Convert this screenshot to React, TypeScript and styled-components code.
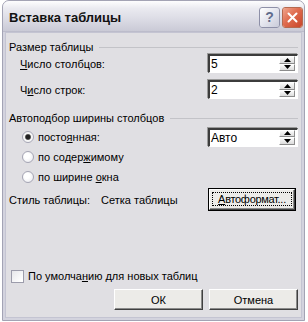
import React from "react";
import styled, { createGlobalStyle } from "styled-components";

const GlobalStyle = createGlobalStyle`
  html, body {
    margin: 0;
    padding: 0;
    background: #ffffff;
  }
  body {
    font-family: "Liberation Sans", Arial, sans-serif;
    font-size: 11px;
    color: #000;
  }
`;

const Window = styled.div`
  margin-left: 2px;
  width: 303px;
  height: 321px;
  display: flex;
  flex-direction: column;
  box-sizing: border-box;
  border: 1px solid #a3a3b4;
  border-radius: 7px 7px 0 0;
  background: #d7d7e2;
  overflow: hidden;
`;

const TitleBar = styled.div`
  height: 30px;
  flex: none;
  display: flex;
  align-items: center;
  padding: 0 1px 0 6px;
  background: linear-gradient(
    #fdfdfe 0%,
    #eaeaf0 25%,
    #dcdce5 60%,
    #cacad6 100%
  );
  box-sizing: border-box;
`;

const Title = styled.span`
  flex: 1;
  font-family: "Liberation Sans", Arial, sans-serif;
  font-weight: bold;
  font-size: 13px;
  color: #111;
  padding-top: 2px;
`;

const CaptionButton = styled.div<{ $red?: boolean }>`
  width: 21px;
  height: 21px;
  margin-left: 2px;
  margin-top: 2px;
  box-sizing: border-box;
  border: 1px solid #ffffff;
  border-radius: 3px;
  outline: 1px solid ${(p) => (p.$red ? "#b5694f" : "#8e90a8")};
  outline-offset: -1px;
  display: flex;
  align-items: center;
  justify-content: center;
  background: ${(p) =>
    p.$red
      ? "linear-gradient(135deg, #f0a58d 0%, #df6c4f 45%, #c9452a 100%)"
      : "linear-gradient(135deg, #ffffff 0%, #e4e5ee 50%, #c9cbd9 100%)"};
  color: #5f6c8c;
  font-weight: bold;
  font-size: 14px;
`;

const Frame = styled.div`
  flex: 1;
  display: flex;
  padding: 0 2px 2px 2px;
  background: #d3d3de;
  border-top: 1px solid #bcbccb;
`;

const Client = styled.div`
  flex: 1;
  display: flex;
  flex-direction: column;
  background: #e0dfe3;
  border: 1px solid #c4c4d2;
  padding: 7px 3px 7px 2px;
`;

const GroupHeader = styled.div<{ $top?: number }>`
  display: flex;
  align-items: center;
  height: 14px;
  margin-top: ${(p) => p.$top ?? 0}px;
  padding-left: 1px;
  gap: 6px;
`;

const GroupLine = styled.div`
  flex: 1;
  height: 0;
  border-top: 1px solid #c3c3c8;
  margin-top: 1px;
`;

const FieldRow = styled.div<{ $top?: number }>`
  display: flex;
  align-items: center;
  justify-content: space-between;
  height: 19px;
  margin-top: ${(p) => p.$top ?? 0}px;
  padding-left: 12px;
`;

const U = styled.span`
  text-decoration: underline;
`;

const SpinBox = styled.div`
  position: relative;
  width: 90px;
  height: 19px;
  box-sizing: border-box;
  background: #fff;
  border-style: solid;
  border-width: 2px 1px 1px 2px;
  border-color: #3c3c3c #ffffff #ffffff #3c3c3c;
  box-shadow: -1px -1px 0 #9a9a9a;
  display: flex;
  align-items: center;
  padding-left: 1px;
  font-size: 12px;
`;

const Spinner = styled.div`
  position: absolute;
  right: 2px;
  top: 0;
  bottom: 1px;
  width: 16px;
  display: flex;
  flex-direction: column;
`;

const SpinHalf = styled.div`
  flex: 1;
  display: flex;
  align-items: center;
  justify-content: center;
  background: linear-gradient(#fbfbfb, #dcdcdc);
  border: 1px solid;
  border-color: #ffffff #8c8c8c #8c8c8c #ffffff;
`;

const RadioRow = styled.div<{ $top?: number }>`
  display: flex;
  align-items: center;
  height: 20px;
  margin-top: ${(p) => p.$top ?? 0}px;
  padding-left: 14px;
  gap: 4px;
`;

const RadioMark = styled.span<{ $on?: boolean }>`
  width: 12px;
  height: 12px;
  flex: none;
  border-radius: 50%;
  box-sizing: border-box;
  border: 1px solid #a5a5b4;
  background: ${(p) =>
    p.$on
      ? "radial-gradient(circle, #222 0, #222 2px, #555 2.5px, #f4f4f4 3.5px, #ffffff 100%)"
      : "radial-gradient(circle at 40% 40%, #ffffff 30%, #e4e4ea 100%)"};
`;

const RadioLabel = styled.span`
  flex: 1;
`;

const StyleRow = styled.div`
  display: flex;
  align-items: center;
  height: 21px;
  margin-top: 2px;
  padding-left: 1px;
  padding-right: 3px;
`;

const StyleLabel = styled.span`
  width: 92px;
`;

const StyleValue = styled.span`
  flex: 1;
`;

const ClassicButton = styled.div<{ $w: number; $focus?: boolean }>`
  width: ${(p) => p.$w}px;
  height: 21px;
  box-sizing: border-box;
  background: #ecebe8;
  border: 1px solid;
  border-color: #ffffff #404040 #404040 #ffffff;
  box-shadow: inset -1px -1px 0 #8a8a8a;
  display: flex;
  align-items: center;
  justify-content: center;
  outline: ${(p) => (p.$focus ? "1px solid #000" : "none")};
  outline-offset: 0;
  padding: ${(p) => (p.$focus ? "2px 2px 3px 2px" : "0")};
  white-space: nowrap;
`;

const FocusRect = styled.span`
  flex: 1;
  min-width: 0;
  align-self: stretch;
  display: flex;
  align-items: center;
  justify-content: center;
  border: 1px dotted #000;
  letter-spacing: -0.3px;
`;

const CheckRow = styled.div`
  display: flex;
  align-items: center;
  height: 14px;
  margin-top: auto;
  padding-left: 3px;
  gap: 4px;
`;

const CheckBox = styled.span`
  width: 13px;
  height: 13px;
  box-sizing: border-box;
  border: 1px solid #9c9cab;
  background: linear-gradient(135deg, #e6e6ea 0%, #ffffff 90%);
`;

const ButtonRow = styled.div`
  display: flex;
  justify-content: flex-end;
  gap: 6px;
  margin-top: 6px;
`;

const Arrow = ({ up }: { up?: boolean }) => (
  <svg width="7" height="4" viewBox="0 0 7 4">
    <polygon points={up ? "3.5,0 7,4 0,4" : "0,0 7,0 3.5,4"} fill="#000" />
  </svg>
);

const Spin = ({ value }: { value: string }) => (
  <SpinBox>
    {value}
    <Spinner>
      <SpinHalf>
        <Arrow up />
      </SpinHalf>
      <SpinHalf>
        <Arrow />
      </SpinHalf>
    </Spinner>
  </SpinBox>
);

const App: React.FC = () => {
  return (
    <>
      <GlobalStyle />
      <Window>
        <TitleBar>
          <Title>Вставка таблицы</Title>
          <CaptionButton>?</CaptionButton>
          <CaptionButton $red>
            <svg width="11" height="11" viewBox="0 0 11 11">
              <path
                d="M1.5 1.5 L9.5 9.5 M9.5 1.5 L1.5 9.5"
                stroke="#fff"
                strokeWidth="2"
                strokeLinecap="round"
              />
            </svg>
          </CaptionButton>
        </TitleBar>
        <Frame>
          <Client>
            <GroupHeader>
              Размер таблицы
              <GroupLine />
            </GroupHeader>
            <FieldRow>
              <span>
                <U>Ч</U>исло столбцов:
              </span>
              <Spin value="5" />
            </FieldRow>
            <FieldRow $top={7}>
              <span>
                Ч<U>и</U>сло строк:
              </span>
              <Spin value="2" />
            </FieldRow>

            <GroupHeader $top={12}>
              Автоподбор ширины столбцов
              <GroupLine />
            </GroupHeader>
            <RadioRow $top={2}>
              <RadioMark $on />
              <RadioLabel>
                посто<U>я</U>нная:
              </RadioLabel>
              <Spin value="Авто" />
            </RadioRow>
            <RadioRow>
              <RadioMark />
              <RadioLabel>
                по содер<U>ж</U>имому
              </RadioLabel>
            </RadioRow>
            <RadioRow>
              <RadioMark />
              <RadioLabel>
                по ширине <U>о</U>кна
              </RadioLabel>
            </RadioRow>

            <StyleRow>
              <StyleLabel>Стиль таблицы:</StyleLabel>
              <StyleValue>Сетка таблицы</StyleValue>
              <ClassicButton $w={86} $focus>
                <FocusRect>
                  <U>А</U>втоформат...
                </FocusRect>
              </ClassicButton>
            </StyleRow>

            <CheckRow>
              <CheckBox />
              <span>
                По умолча<U>н</U>ию для новых таблиц
              </span>
            </CheckRow>
            <ButtonRow>
              <ClassicButton $w={89}>ОК</ClassicButton>
              <ClassicButton $w={89}>Отмена</ClassicButton>
            </ButtonRow>
          </Client>
        </Frame>
      </Window>
    </>
  );
};

export default App;
